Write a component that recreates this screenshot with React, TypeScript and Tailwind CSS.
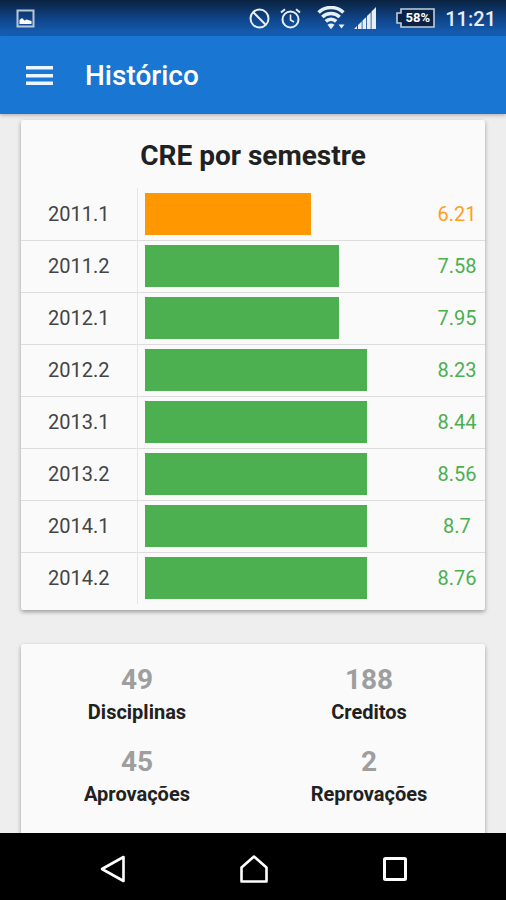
const semesters = [
  { name: '2011.1', cre: 6.21 },
  { name: '2011.2', cre: 7.58 },
  { name: '2012.1', cre: 7.95 },
  { name: '2012.2', cre: 8.23 },
  { name: '2013.1', cre: 8.44 },
  { name: '2013.2', cre: 8.56 },
  { name: '2014.1', cre: 8.7 },
  { name: '2014.2', cre: 8.76 },
]

const totals = [
  { label: 'Disciplinas', value: 49 },
  { label: 'Creditos', value: 188 },
  { label: 'Aprovações', value: 45 },
  { label: 'Reprovações', value: 2 },
]

function StatusBar() {
  return (
    <div className="flex h-9 shrink-0 items-center bg-linear-to-b from-[#0a2240] via-[#0f4386] to-[#1562b9] pr-2.5 pl-4 text-[#e6eef7]">
      <svg className="mr-auto" width="19" height="19" viewBox="0 0 19 19">
        <rect x="1.5" y="1.5" width="16" height="16" fill="none" stroke="#b9c6d8" strokeWidth="2" />
        <path d="M3.5 15v-4l2.500-2 2.500 2.500 2-1 5 1.500v3z" fill="#fff" />
      </svg>
      <svg className="mr-2.5" width="21" height="21" viewBox="0 0 21 21" fill="none" stroke="currentColor" strokeWidth="2">
        <circle cx="10.5" cy="10.5" r="9" />
        <path d="M4.300 4.300l12.400 12.400" />
      </svg>
      <svg className="mr-4" width="21" height="21" viewBox="0 0 21 21" fill="none" stroke="currentColor" strokeWidth="2">
        <circle cx="10.5" cy="11.5" r="8" />
        <path d="M10.500 6.500v5.500l3.500 2" strokeWidth="1.6" />
        <path d="M1 4.500l4-3.200M20 4.500l-4-3.200" />
      </svg>
      <svg className="mr-2" width="29" height="24" viewBox="0 0 29 24" fill="none" stroke="currentColor" strokeWidth="3.6">
        <path d="M1.600 6.500a18 18 0 0 1 24.800 0" />
        <path d="M5.300 11a12.500 12.500 0 0 1 17.400 0" />
        <path d="M8.800 15.400a7.500 7.500 0 0 1 10.400 0" />
        <path d="M10.500 18.800q3.500-2.500 7 0l-3.500 4.500z" fill="currentColor" stroke="none" />
        <path d="M21.500 18.500h6l-3 4z" fill="currentColor" stroke="none" />
      </svg>
      <svg className="mr-5" width="22" height="22" viewBox="0 0 22 22" fill="currentColor">
        <path d="M0 22l3-3v3zM4 22v-4l3.700-3.500V22zM8.500 22v-8.500l3.700-3.500v12zM13 22V9l3.700-3.500V22zM17.500 22V4.500L22 0v22z" />
      </svg>
      <div className="relative mr-2.5 flex h-5 w-[39px] items-center justify-center pl-1">
        <svg className="absolute inset-0" width="39" height="20" viewBox="0 0 39 20">
          <path d="M5 1h33v18H5v-4H1V5h4z" fill="#0a2243" stroke="#c3cedd" strokeWidth="1.6" />
        </svg>
        <span className="relative text-[13px] leading-4 font-bold text-white">58%</span>
      </div>
      <span className="pt-0.5 text-xl leading-6 font-medium">11:21</span>
    </div>
  )
}

function AppBar() {
  return (
    <header className="z-10 flex h-[78px] shrink-0 items-center bg-[#1976d2] px-[26px] pt-0.5 text-white shadow-[0_1px_4px_rgba(0,0,0,0.3)]">
      <button type="button" aria-label="Menu" className="mr-8">
        <svg width="27" height="20" viewBox="0 0 27 20" fill="#e9f5ff">
          <path d="M0 0h27v3.500H0zM0 8h27v3.500H0zM0 15.500h27V19H0z" />
        </svg>
      </button>
      <h1 className="text-[28px] leading-8 font-medium">Histórico</h1>
    </header>
  )
}

function Card({ children }: any) {
  return (
    <section className="rounded-xs bg-[#fafafa] shadow-[0_2px_4px_rgba(0,0,0,0.35)]">
      {children}
    </section>
  )
}

function SemesterTable() {
  return (
    <table className="w-full table-fixed border-collapse text-center text-xl leading-6">
      <colgroup>
        <col className="w-1/4" />
        <col />
        <col className="w-14" />
      </colgroup>
      <tbody>
        {semesters.map(({ name, cre }) => (
          <tr key={name} className="h-[52px] border-b border-[#dcdcdc] last:border-b-0">
            <th scope="row" className="font-normal text-[#444]">
              {name}
            </th>
            <td className="border-l border-[#e4e4e4] px-[7px]">
              {/* the bar only grows by whole points */}
              <div
                className={cre < 7 ? 'h-[42px] bg-[#ff9800]' : 'h-[42px] bg-[#4caf50]'}
                style={{ width: `${Math.floor(cre) * 10}%` }}
              />
            </td>
            <td className={cre < 7 ? 'text-[#ff9f1a]' : 'text-[#4caf50]'}>{cre}</td>
          </tr>
        ))}
      </tbody>
    </table>
  )
}

function BottomBar() {
  return (
    <nav className="flex h-[67px] shrink-0 items-center justify-center gap-[114px] bg-black pt-1 pl-0.5 text-white">
      <button type="button" aria-label="Voltar">
        <svg width="26" height="28" viewBox="0 0 26 28" fill="none" stroke="currentColor" strokeWidth="2.6">
          <path d="M23.500 2v24L2 14z" strokeLinejoin="round" />
        </svg>
      </button>
      <button type="button" aria-label="Início">
        <svg width="28" height="28" viewBox="0 0 28 28" fill="none" stroke="currentColor" strokeWidth="2.6">
          <path d="M1.500 26.500V12.500L14 1.500l12.500 11v14z" strokeLinejoin="round" />
        </svg>
      </button>
      <button type="button" aria-label="Recentes">
        <svg width="26" height="26" viewBox="0 0 26 26" fill="none" stroke="currentColor" strokeWidth="3">
          <rect x="2.5" y="2.5" width="21" height="21" rx="1" />
        </svg>
      </button>
    </nav>
  )
}

export default function App() {
  return (
    <div className="flex h-screen flex-col bg-[#eeeeee] font-[Roboto,sans-serif]">
      <StatusBar />
      <AppBar />
      <main className="flex min-h-0 flex-1 flex-col gap-[34px] overflow-y-auto px-[21px] pt-1.5 [scrollbar-width:none]">
        <Card>
          <h2 className="pt-5 pb-4 text-center text-[28px] leading-8 font-bold text-[#212121]">
            CRE por semestre
          </h2>
          <SemesterTable />
          <div className="h-1.5" />
        </Card>
        <Card>
          <dl className="grid grid-cols-2 gap-y-5 pt-5 pb-10 text-center">
            {totals.map(({ label, value }) => (
              <div key={label} className="flex flex-col-reverse gap-0.5">
                <dt className="text-xl leading-7 font-bold text-[#212121]">{label}</dt>
                <dd className="text-[28px] leading-8 font-bold text-[#9e9e9e]">{value}</dd>
              </div>
            ))}
          </dl>
        </Card>
      </main>
      <BottomBar />
    </div>
  )
}
